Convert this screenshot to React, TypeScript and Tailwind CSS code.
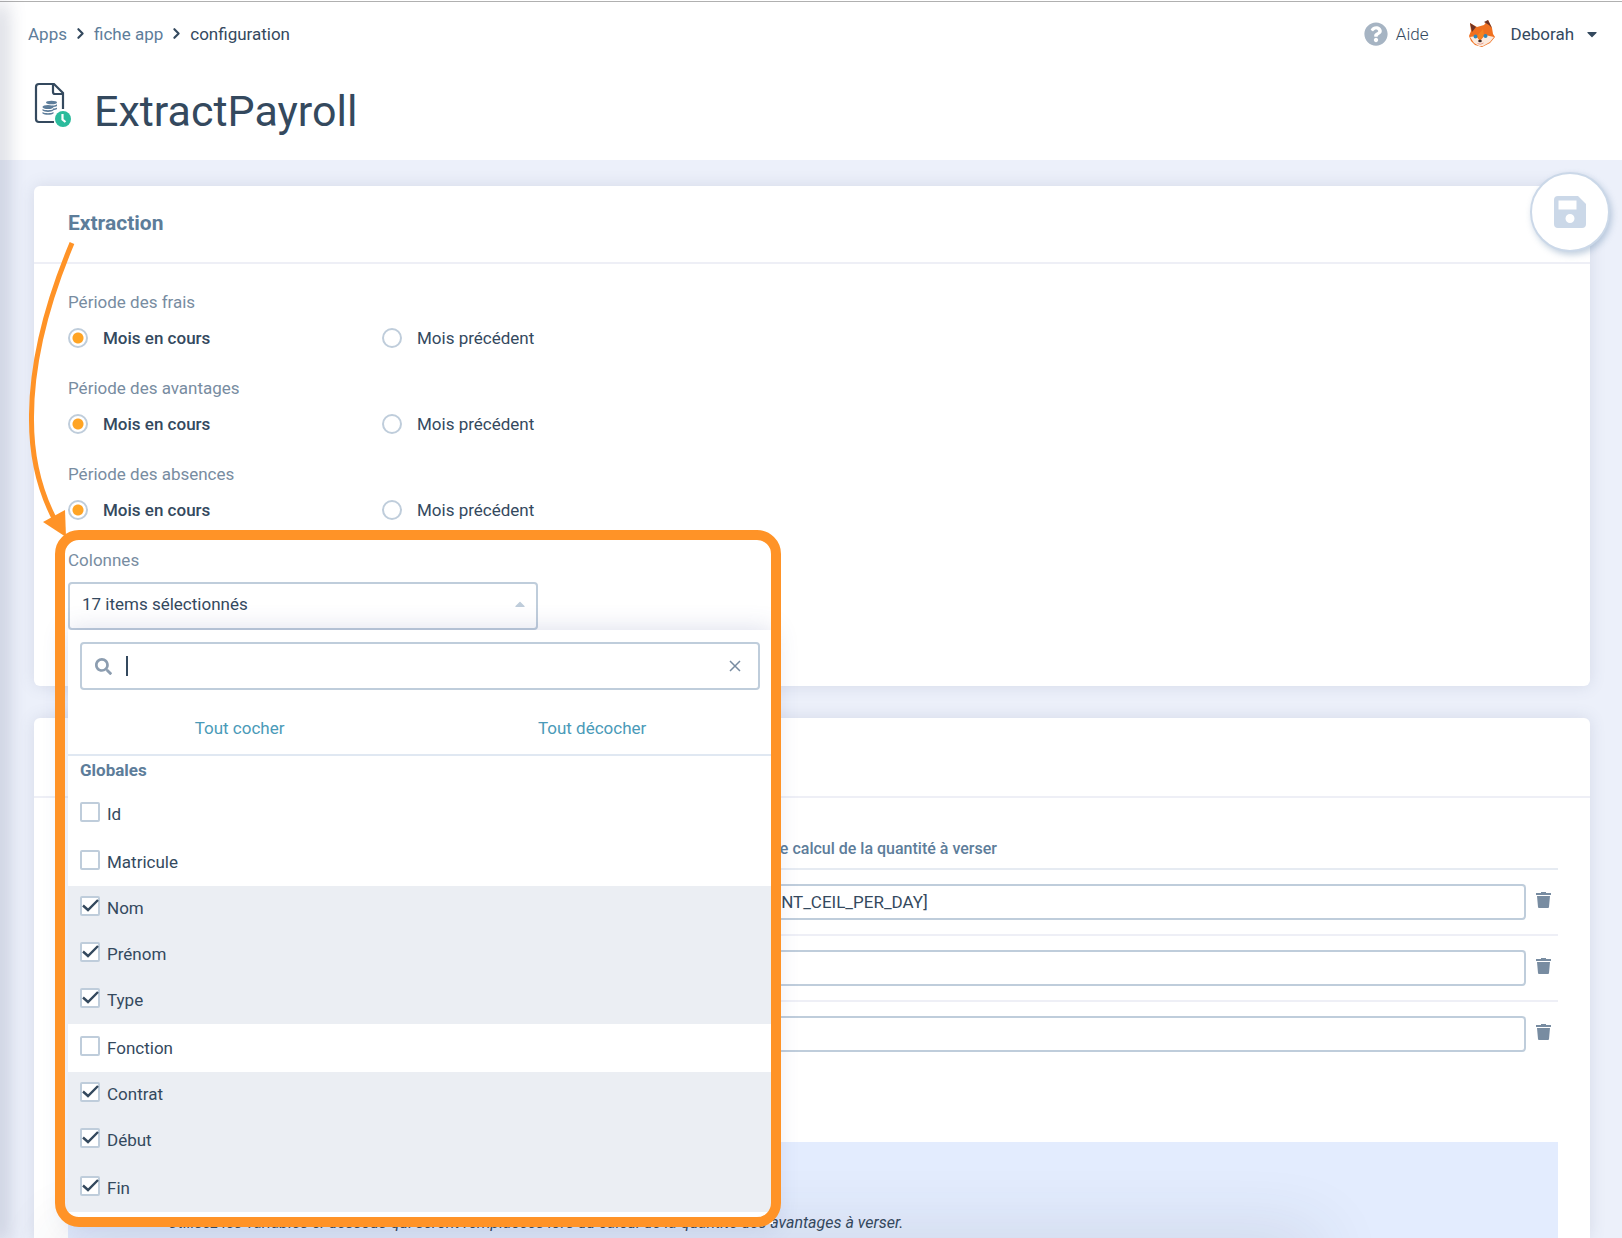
import React from "react";
import clsx from "clsx";
import { ChevronRight } from "lucide-react";
import { FaCaretDown, FaCaretUp, FaQuestionCircle, FaSearch } from "react-icons/fa";

type tRadioField = {
  name: string;
  label: string;
};

type tColumn = {
  label: string;
  checked: boolean;
};

const periods: tRadioField[] = [
  { name: "frais", label: "Période des frais" },
  { name: "avantages", label: "Période des avantages" },
  { name: "absences", label: "Période des absences" },
];

const columns: tColumn[] = [
  { label: "Id", checked: false },
  { label: "Matricule", checked: false },
  { label: "Nom", checked: true },
  { label: "Prénom", checked: true },
  { label: "Type", checked: true },
  { label: "Fonction", checked: false },
  { label: "Contrat", checked: true },
  { label: "Début", checked: true },
  { label: "Fin", checked: true },
];

const formulas = ["[AMOUNT_CEIL_PER_DAY]", "", ""];

function PayrollIcon() {
  return (
    <svg width="40" height="46" viewBox="0 0 40 46" fill="none">
      <path
        d="M20 40H5a3 3 0 0 1-3-3V5a3 3 0 0 1 3-3h15l9 9v16"
        stroke="#34495e"
        strokeWidth="2.2"
      />
      <path d="M19 2v8a2 2 0 0 0 2 2h8" stroke="#34495e" strokeWidth="2.2" />
      <g fill="#5d7d9a">
        <ellipse cx="17.5" cy="20.5" rx="5.5" ry="1.8" />
        <path d="M18 23.500c2.500 0 4-.4 5-1.200v1.700c-1 .8-2.500 1.100-5 1.100zM19 26.500c2 0 3-.3 4-1v1.600c-1 .7-2 1-4 1z" />
        <ellipse cx="14" cy="25" rx="5.500" ry="2" />
        <path d="M8.500 27c2 1.600 9 1.600 11 0v1.600c-2 1.700-9 1.700-11 0zM8.500 30c2 1.600 9 1.600 11 0v1.500c-2 1.700-9 1.700-11 0z" />
      </g>
      <circle cx="29" cy="37" r="8" fill="#2bbb9c" />
      <path d="M28.500 32v5.500l3 2.500" stroke="#fff" strokeWidth="2.2" />
    </svg>
  );
}

function Fox() {
  return (
    <svg width="26" height="27" viewBox="0 0 26 27">
      <path d="M1 3l7 4 7-2 4-5 4 8 1 6 2 3-5 6-8 4-7-2-4-4-2-5 2-5z" fill="#f0701f" />
      <path d="M1 3l6 4-4 5zM15 2l4-2 4 8-3-3z" fill="#6d3326" />
      <path d="M1 17l6-1 4 5 5-6 9 2-4 5-7 4h-4l-5-3z" fill="#fbe9dc" />
      <path d="M8 16l3 5 4-6-1-6z" fill="#f58220" />
      <circle cx="6.500" cy="16.500" r="1.900" fill="#2d86b8" />
      <circle cx="16.500" cy="16" r="2" fill="#2d86b8" />
      <ellipse cx="11" cy="21" rx="1.800" ry="1.300" fill="#3b2a2a" />
      <path d="M8.500 23.500q3 1.800 6-.5" stroke="#e79a8c" fill="none" />
    </svg>
  );
}

function SaveIcon() {
  return (
    <svg width="32" height="32" viewBox="0 0 32 32" className="fill-[#cbd8e8]">
      <path
        fillRule="evenodd"
        d="M4 0h20l8 8v20a4 4 0 0 1-4 4H4a4 4 0 0 1-4-4V4a4 4 0 0 1 4-4zM4.500 4.500v9h18v-9zM16 18a4.500 4.500 0 1 0 0 9 4.500 4.500 0 0 0 0-9z"
      />
    </svg>
  );
}

function TrashIcon() {
  return (
    <svg width="15" height="16" viewBox="0 0 15 16" className="fill-[#788ca1]">
      <path d="M5 0h5v1h5v2H0V1h5zM1 4h13l-1 11a1 1 0 0 1-1 1H3a1 1 0 0 1-1-1z" />
    </svg>
  );
}

function Header() {
  return (
    <header className="h-40 bg-white pt-px">
      <div className="flex items-center justify-between border-t border-[#b0b0b0] pt-[18px] pr-[22px] pl-7">
        <nav className="flex items-center gap-[5px] text-[17px] leading-6 text-[#5d7d9a]">
          <a href="#apps">Apps</a>
          <ChevronRight size={17} strokeWidth={3} className="text-[#34495e]" />
          <a href="#fiche">fiche app</a>
          <ChevronRight size={17} strokeWidth={3} className="text-[#34495e]" />
          <span className="text-[#34495e]">configuration</span>
        </nav>
        <div className="flex items-center text-[17px] leading-6">
          <a href="#aide" className="flex items-center gap-2 font-light">
            <FaQuestionCircle size={24} className="text-[#a6b4c3]" />
            Aide
          </a>
          <button className="ml-10 flex items-center">
            <Fox />
            <span className="ml-4">Deborah</span>
            <FaCaretDown size={16} className="ml-2.5" />
          </button>
        </div>
      </div>
      <div className="flex items-center gap-5 pt-[26px] pr-7 pl-[34px]">
        <PayrollIcon />
        <h1 className="pt-3 text-[43px] leading-[52px]">ExtractPayroll</h1>
      </div>
    </header>
  );
}

function RadioField({ name, label }: tRadioField) {
  return (
    <fieldset className="mb-[26px]">
      <legend className="mb-3 text-[#788ca1]">{label}</legend>
      <div className="flex">
        {["Mois en cours", "Mois précédent"].map((option, i) => (
          <label key={option} className="flex w-[314px] items-center gap-[15px]">
            <input
              type="radio"
              name={name}
              defaultChecked={i === 0}
              className="size-5 shrink-0 appearance-none rounded-full border-2 border-[#bfcddb] bg-white checked:bg-[radial-gradient(circle,#ffa424_5px,transparent_6px)]"
            />
            <span className={clsx(i === 0 && "font-medium")}>{option}</span>
          </label>
        ))}
      </div>
    </fieldset>
  );
}

function ColumnOption({ label, checked }: tColumn) {
  return (
    <label
      className={clsx(
        "flex items-start gap-[7px] px-3",
        checked ? "h-[46px] bg-[#ebeef3] pt-2.5 last:h-12 last:pt-3" : "h-12 pt-3"
      )}
    >
      <span className="relative size-5">
        <input
          type="checkbox"
          defaultChecked={checked}
          className="peer block size-5 appearance-none rounded-xs border-2 border-[#bfcddb] bg-white"
        />
        <svg
          viewBox="0 0 20 20"
          fill="none"
          className="pointer-events-none absolute inset-0 hidden stroke-[#34495e] stroke-[2.400] peer-checked:block"
        >
          <path d="M3 9.500L8 14 18 4" />
        </svg>
      </span>
      <span>{label}</span>
    </label>
  );
}

function ColumnsDropdown() {
  return (
    <div className="absolute top-full left-0 z-10 w-[705px] bg-white pt-3 pb-3 shadow-[0_0_24px_rgba(70,80,150,0.2)]">
      <div className="mr-[13px] ml-3 flex h-12 items-center rounded-sm border-2 border-[#bfcddb] px-[13px]">
        <FaSearch size={17} className="text-[#8c9db0]" />
        <span className="ml-3.5 h-5 w-0.5 bg-[#34495e]" />
        <input
          type="text"
          aria-label="Rechercher"
          className="min-w-0 flex-1 bg-transparent outline-none"
        />
        <button aria-label="Effacer" className="px-1">
          <svg width="12" height="12" viewBox="0 0 12 12" className="stroke-[#788ca1] stroke-[1.500]">
            <path d="M1 1l10 10M11 1L1 11" />
          </svg>
        </button>
      </div>
      <div className="flex justify-around border-b-2 border-[#e0e8f2] pt-[26px] pb-3.5 text-[#4a9ab8]">
        <button>Tout cocher</button>
        <button>Tout décocher</button>
      </div>
      <p className="h-[34px] px-3 pt-0.5 font-bold text-[#5d7d9a]">Globales</p>
      <div>
        {columns.map((column) => (
          <ColumnOption key={column.label} {...column} />
        ))}
      </div>
    </div>
  );
}

function Highlight() {
  return (
    <div className="pointer-events-none absolute -top-[18px] -left-[13px] z-20 h-[697px] w-[726px] rounded-3xl border-10 border-[#ff9327]">
      <svg
        width="50"
        height="300"
        viewBox="0 0 50 300"
        fill="none"
        className="absolute -top-[300px] -left-9"
      >
        <path d="M43 3C17 65 2 125 2.500 180c0 40 8 71 24 101" stroke="#ff9327" strokeWidth="5" />
        <path d="M14 282L36 270 37 297z" fill="#ff9327" />
      </svg>
    </div>
  );
}

function Extraction() {
  return (
    <section className="rounded-md bg-white shadow-[0_0_16px_rgba(80,95,130,0.15)]">
      <h2 className="border-b-2 border-[#eeeff6] px-[34px] pt-[23px] pb-[25px] text-[21px] leading-7 font-bold text-[#5d7d9a]">
        Extraction
      </h2>
      <div className="px-[34px] pt-[26px] pb-14">
        {periods.map((period) => (
          <RadioField key={period.name} {...period} />
        ))}
        <div className="relative">
          <label htmlFor="colonnes" className="mb-2.5 block text-[#788ca1]">
            Colonnes
          </label>
          <button
            id="colonnes"
            className="flex h-12 w-[470px] items-center justify-between rounded-sm border-2 border-[#bfcddb] pr-2 pb-1 pl-3"
          >
            17 items sélectionnés
            <FaCaretUp size={16} className="text-[#bfcddb]" />
          </button>
          <ColumnsDropdown />
          <Highlight />
        </div>
      </div>
    </section>
  );
}

function Formulas() {
  return (
    <section className="flex flex-1 flex-col rounded-t-md bg-white shadow-[0_0_16px_rgba(80,95,130,0.15)]">
      <div className="h-20 border-b-2 border-[#eeeff6]" />
      <div className="flex flex-1 flex-col pt-[35px] pr-8 pl-[34px]">
        <table className="w-full">
          <thead>
            <tr className="h-9 border-b-2 border-[#e6ebf2] align-top">
              <th className="w-[640px]" />
              <th className="pt-1 text-left text-[16px] font-medium text-[#5d7d9a]">
                Formule de calcul de la quantité à verser
              </th>
              <th className="w-8" />
            </tr>
          </thead>
          <tbody>
            {formulas.map((formula, i) => (
              <tr
                key={i}
                className="h-[66px] border-b-2 border-[#eeeff6] last:border-transparent"
              >
                <td />
                <td>
                  <input
                    type="text"
                    defaultValue={formula}
                    aria-label="Formule de calcul"
                    className="block h-9 w-full rounded-sm border-2 border-[#bfcddb] px-[18px]"
                  />
                </td>
                <td className="pb-1 pl-2.5">
                  <button aria-label="Supprimer" className="block">
                    <TrashIcon />
                  </button>
                </td>
              </tr>
            ))}
          </tbody>
        </table>
        <div className="mt-[74px] flex-1 bg-[#e3ecfe] px-[100px] pt-[69px] text-base italic">
          Utilisez les variables ci-dessous qui seront remplacées lors du calcul de la quantité des
          avantages à verser.
        </div>
      </div>
    </section>
  );
}

export default function App() {
  return (
    <div className="relative flex min-h-screen flex-col overflow-hidden bg-[#ecf0fa] font-[Roboto,sans-serif] text-[17px] leading-6 text-[#34495e]">
      <Header />
      <main className="relative flex flex-1 flex-col gap-8 pt-[26px] pr-8 pl-[34px]">
        <Extraction />
        <Formulas />
        <button
          aria-label="Enregistrer"
          className="absolute top-3 right-3 flex size-20 items-center justify-center rounded-full border-2 border-[#cbd8e8] bg-white shadow-[2px_3px_6px_rgba(120,150,185,0.45)]"
        >
          <SaveIcon />
        </button>
      </main>
      <div className="pointer-events-none absolute top-2 bottom-0 left-0 w-px -translate-x-px shadow-[0_0_20px_4px_rgba(60,70,110,0.4)]" />
      <div className="pointer-events-none absolute right-[20%] bottom-0 left-[5%] h-px translate-y-5 shadow-[0_0_70px_20px_rgba(50,60,70,0.16)]" />
    </div>
  );
}
